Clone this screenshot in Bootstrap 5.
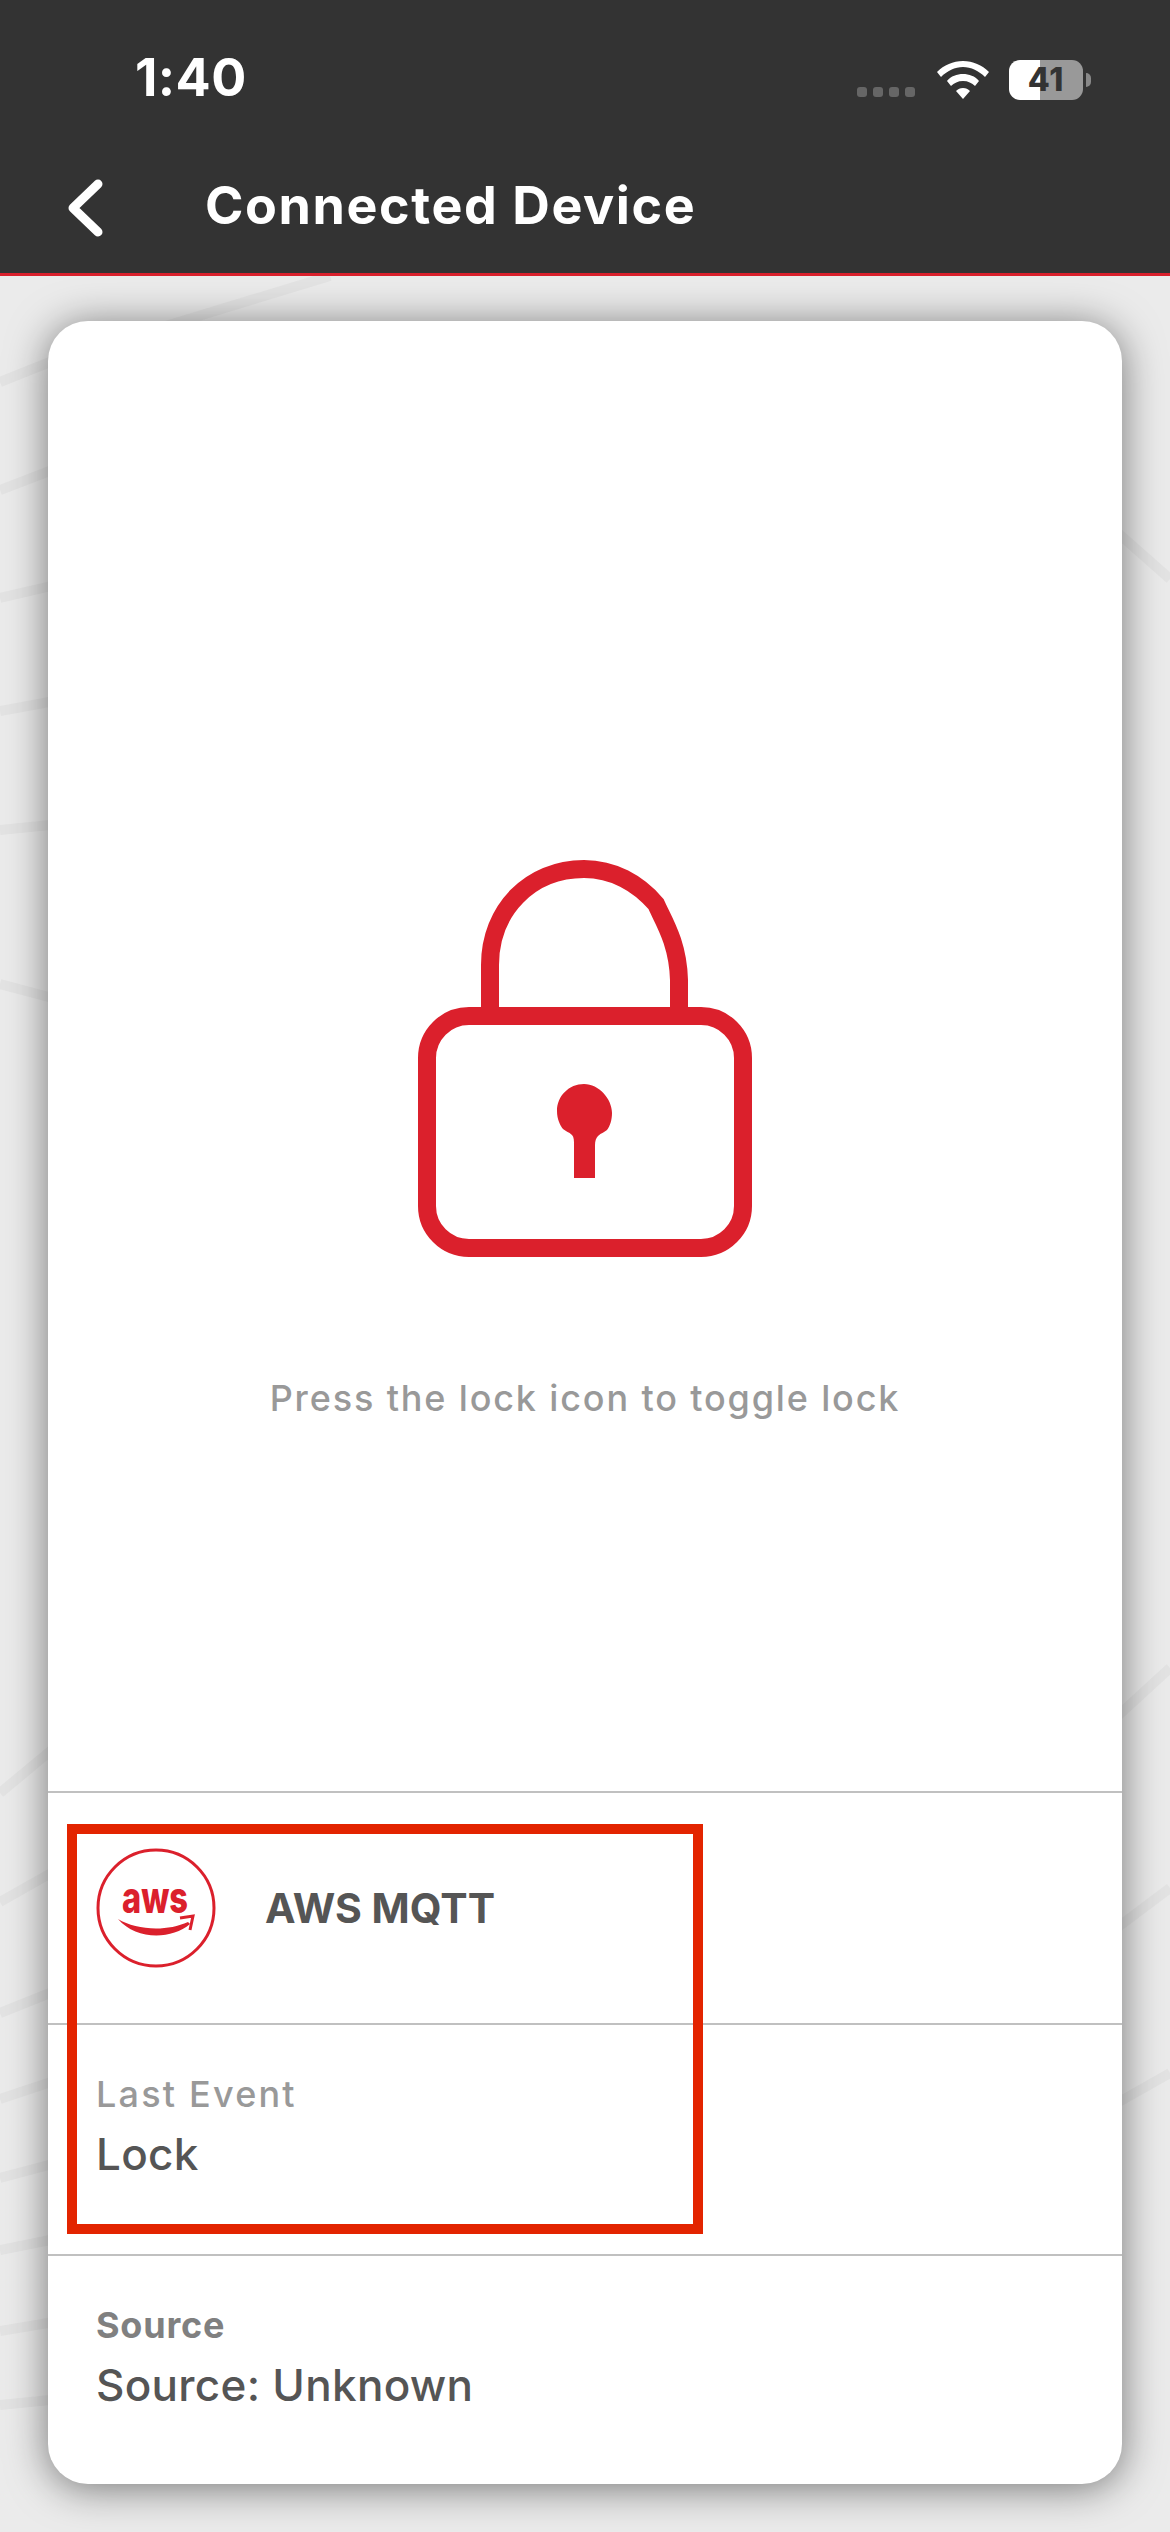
<!doctype html>
<html lang="en">
<head>
<meta charset="utf-8">
<title>Connected Device</title>
<link rel="stylesheet" href="https://cdn.jsdelivr.net/npm/bootstrap@5.3.0/dist/css/bootstrap.min.css">
<style>
html,body{height:100%}
body{background:#ebebeb;font-family:Inter,"Liberation Sans",sans-serif;color:#555}
.screen{width:1170px;height:2532px;overflow:hidden;position:relative}
.bgart{position:absolute;inset:0;width:1170px;height:2532px}
.topbar{background:#333;height:276px;border-bottom:3px solid #d9202c;position:relative;color:#fff}
.statusrow{height:160px;padding-left:135px;padding-right:79px}
.clock{font-size:52px;font-weight:700;letter-spacing:.4px;line-height:1;margin-top:-4px}
.navrow{height:113px;padding-left:67px;padding-bottom:18px}
.navtitle{font-size:52px;font-weight:700;letter-spacing:1.6px;margin:-3px 0 0 102px;line-height:1}
.sig{display:flex;gap:6px;margin-top:24px;margin-right:22px}
.sig i{display:block;width:10px;height:10px;border-radius:3px;background:#666}
.wifi{margin-right:20px}
.batt{width:74px;height:40px;border-radius:11px;background:linear-gradient(90deg,#fff 0 31px,#999 31px);font-weight:800;font-size:32px;letter-spacing:1px;color:#333;line-height:40px;text-align:center}
.nub{width:5px;height:14px;background:#888;border-radius:0 7px 7px 0;margin-left:3px}
.panel{position:relative;margin:45px 48px 0;height:2163px;background:#fff;border-radius:40px;box-shadow:0 4px 40px rgba(0,0,0,.5);display:flex;flex-direction:column}
.lockzone{height:1470px;padding-top:539px}
.hint{font-size:36px;font-weight:500;letter-spacing:1.85px;color:#999;margin-top:120px;line-height:1.2}
.rowline{border-top:2px solid #c0c0c0;padding-left:48px}
.r1{height:232px;gap:49px;padding-top:55px}
.r1t{font-size:41px;font-weight:700;color:#555;margin-top:36px;line-height:1.2}
.r2{height:231px;padding-top:48px}
.r3{flex:1;padding-top:48px}
.lab{font-size:36px;font-weight:500;letter-spacing:2.2px;line-height:1.2;color:#999}
.lab-b{font-weight:700;letter-spacing:.8px;color:#808080}
.val{font-size:44px;font-weight:500;letter-spacing:.3px;line-height:1.2;color:#555;margin-top:12px}
.redbox{position:absolute;left:19px;top:1503px;width:636px;height:410px;border:10px solid #e32400;pointer-events:none}
</style>
</head>
<body>
<div class="screen">
<svg class="bgart" viewBox="0 0 1170 2532" fill="none" stroke="#e3e3e3" stroke-width="10" aria-hidden="true">
<path d="M100 346L330 276M0 382L60 358M0 490L60 467M0 598L60 584M0 711L60 700M0 830L60 824M0 984L60 1000M0 1793L60 1743M0 1902L60 1868M0 2013L60 1989M0 2099L60 2079M0 2178L60 2162M0 2250L60 2238M0 2331L60 2321M0 2405L60 2399M1110 526L1170 579M1110 1723L1170 1668M1110 1933L1170 1888M1110 2107L1170 2073"/>
</svg>
<header class="topbar">
<div class="statusrow d-flex justify-content-between align-items-center">
<div class="clock">1:40</div>
<div class="d-flex align-items-center">
<div class="sig"><i></i><i></i><i></i><i></i></div>
<svg width="52" height="38" viewBox="0 0 52 38" class="wifi" aria-hidden="true"><path fill="#fff" d="M26 0C16 0 7 4 0 11l4 5C10 10 18 6 26 6s16 4 22 10l4-5C45 4 36 0 26 0zM26 13c-6 0-12 2-16 7l4 5c3-3 7-5 12-5s9 2 12 5l4-5c-4-5-10-7-16-7zM26 27c-3 0-5 1-7 3l7 8 7-8c-2-2-4-3-7-3z"/></svg>
<div class="batt">41</div>
<div class="nub"></div>
</div>
</div>
<div class="navrow d-flex align-items-center">
<svg width="36" height="58" viewBox="0 0 36 58" aria-hidden="true"><path d="M31 5L6 29l25 24" fill="none" stroke="#fff" stroke-width="9" stroke-linecap="round" stroke-linejoin="round"/></svg>
<h1 class="navtitle">Connected Device</h1>
</div>
</header>
<main class="panel">
<section class="lockzone d-flex flex-column align-items-center">
<svg width="334" height="397" viewBox="0 0 334 397" aria-label="Lock" role="img">
<g fill="none" stroke="#db202c" stroke-width="18">
<path d="M72 147V105C72 50 112 9 166 9C195 9 220 23 238 44C245 60 260 82 261 120V147"/>
<rect x="9" y="156" width="316" height="232" rx="42"/>
</g>
<path fill="#db202c" d="M166 224c-15 0-27 12-27 27 0 8 3 14 6 18 2 2 6 3 9 6 2 2 2 6 2 10v33h21v-33c0-4 1-7 3-9 3-3 7-4 9-6 3-4 5-10 5-17 0-14-13-29-28-29z"/>
</svg>
<p class="hint mb-0">Press the lock icon to toggle lock</p>
</section>
<section class="rowline r1 d-flex">
<svg width="120" height="120" viewBox="0 0 120 120" aria-label="aws" role="img" class="flex-shrink-0">
<circle cx="60" cy="60" r="58" fill="none" stroke="#db202c" stroke-width="3"/>
<text x="26" y="65" textLength="66" lengthAdjust="spacingAndGlyphs" fill="#db202c" font-family="Inter,sans-serif" font-weight="800" font-size="44">aws</text>
<path fill="#db202c" d="M22 71C40 82 70 84 92 74L94 76C75 92 40 92 22 71z"/>
<path d="M84 70l13-2-3 14" fill="none" stroke="#db202c" stroke-width="3"/>
</svg>
<div class="r1t">AWS MQTT</div>
</section>
<section class="rowline r2">
<div class="lab">Last Event</div>
<div class="val">Lock</div>
</section>
<section class="rowline r3">
<div class="lab lab-b">Source</div>
<div class="val">Source: Unknown</div>
</section>
<div class="redbox"></div>
</main>
</div>
<script src="https://cdn.jsdelivr.net/npm/bootstrap@5.3.0/dist/js/bootstrap.bundle.min.js"></script>
</body>
</html>
